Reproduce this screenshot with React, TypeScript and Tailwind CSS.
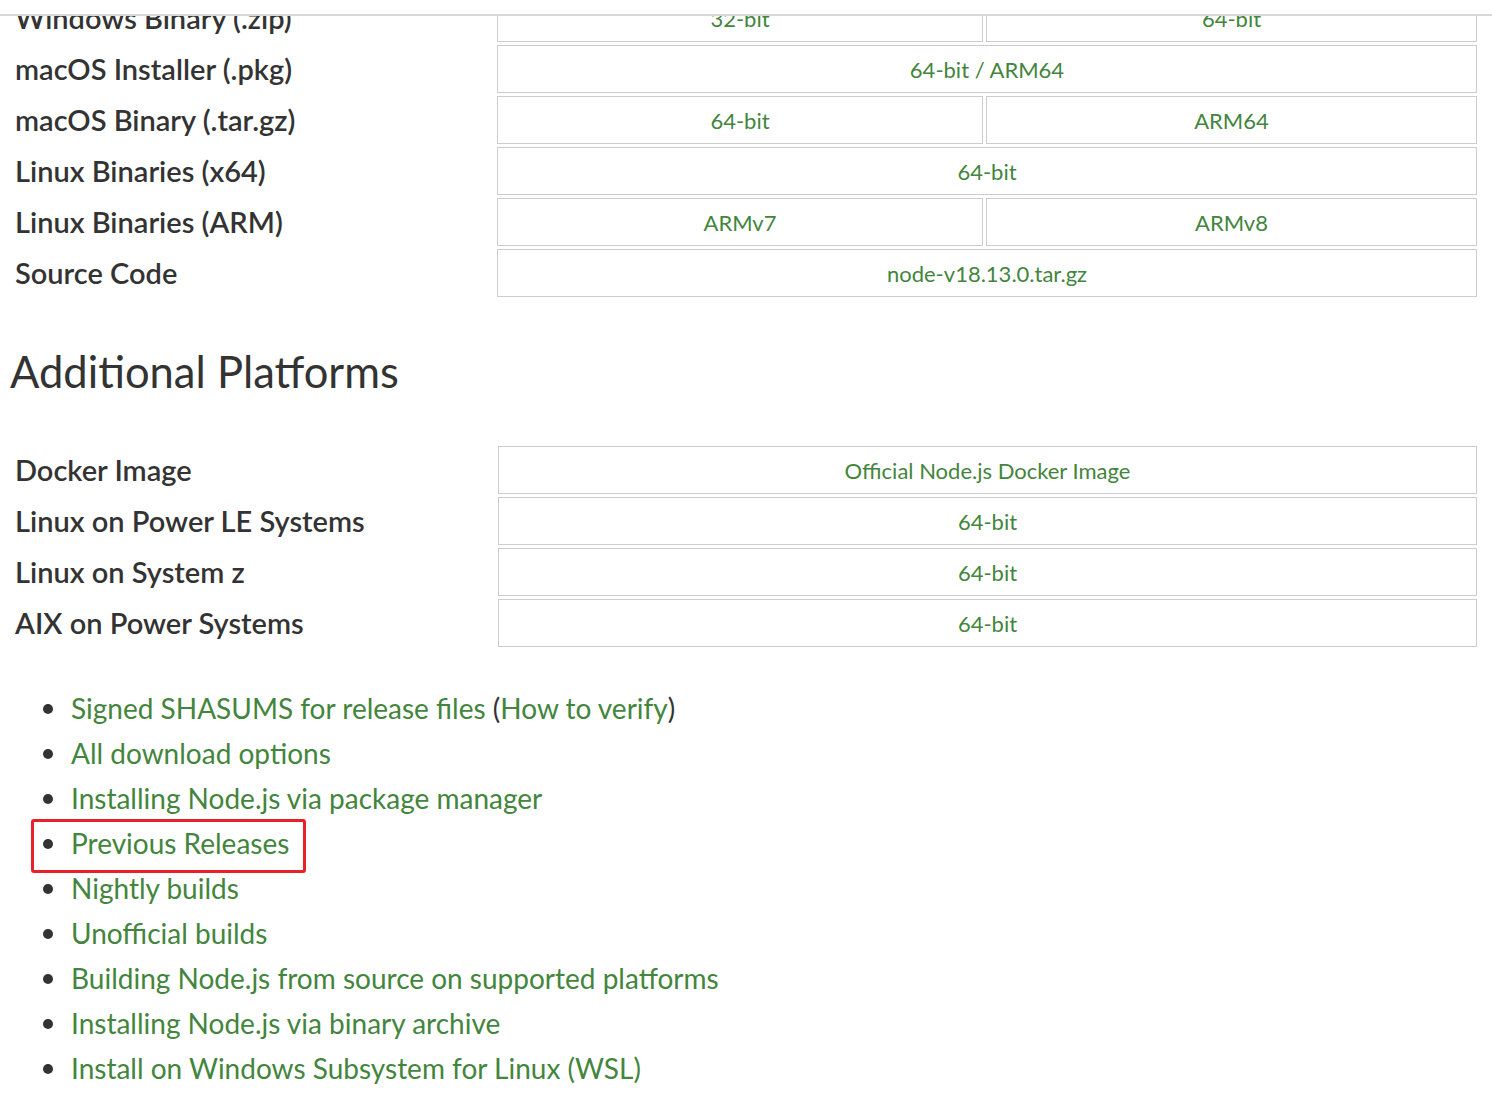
import React from "react";

type Cell = { text: string; w?: string };
type Row = { label: string; cells: Cell[] };

const rows1: Row[] = [
  { label: "Windows Binary (.zip)", cells: [{ text: "32-bit", w: "w-[486px]" }, { text: "64-bit" }] },
  { label: "macOS Installer (.pkg)", cells: [{ text: "64-bit / ARM64" }] },
  { label: "macOS Binary (.tar.gz)", cells: [{ text: "64-bit", w: "w-[486px]" }, { text: "ARM64" }] },
  { label: "Linux Binaries (x64)", cells: [{ text: "64-bit" }] },
  { label: "Linux Binaries (ARM)", cells: [{ text: "ARMv7", w: "w-[486px]" }, { text: "ARMv8" }] },
  { label: "Source Code", cells: [{ text: "node-v18.13.0.tar.gz" }] },
];

const rows2: Row[] = [
  { label: "Docker Image", cells: [{ text: "Official Node.js Docker Image" }] },
  { label: "Linux on Power LE Systems", cells: [{ text: "64-bit" }] },
  { label: "Linux on System z", cells: [{ text: "64-bit" }] },
  { label: "AIX on Power Systems", cells: [{ text: "64-bit" }] },
];

const links = [
  "All download options",
  "Installing Node.js via package manager",
  "Previous Releases",
  "Nightly builds",
  "Unofficial builds",
  "Building Node.js from source on supported platforms",
  "Installing Node.js via binary archive",
  "Install on Windows Subsystem for Linux (WSL)",
];

function DlTable({ rows, labelW }: { rows: Row[]; labelW: string }) {
  return (
    <div className="flex flex-col gap-[3px] pr-[15px]">
      {rows.map((r) => (
        <div key={r.label} className="flex h-[48px]">
          <div
            className={`${labelW} shrink-0 pl-[15px] flex items-center text-[29px] font-semibold text-[#333333]`}
          >
            {r.label}
          </div>
          <div className="flex-1 flex gap-[3px]">
            {r.cells.map((c, i) => (
              <div
                key={i}
                className={`${c.w ? c.w + " shrink-0" : "flex-1"} border border-[#cccccc] flex items-center justify-center text-[22px] text-[#43853d]`}
              >
                {c.text}
              </div>
            ))}
          </div>
        </div>
      ))}
    </div>
  );
}

function Bullet() {
  return <span className="w-[10px] h-[10px] rounded-full bg-[#333333] shrink-0 mr-[18px]" />;
}

export default function App() {
  return (
    <div className="w-[1492px] h-[1095px] bg-white overflow-hidden font-['Lato','Liberation_Sans',sans-serif]">
      <div className="h-[16px] border-b-2 border-[#d8d8d8] bg-white" />
      <div className="overflow-hidden">
        <div className="-mt-[22px]">
          <DlTable rows={rows1} labelW="w-[497px]" />
          <h2 className="mt-[44px] ml-[10px] h-[60px] leading-[60px] text-[43.5px] font-normal text-[#333333]">
            Additional Platforms
          </h2>
          <div className="mt-[45px]">
            <DlTable rows={rows2} labelW="w-[498px]" />
          </div>
          <ul className="mt-[39px] pl-[43px] flex flex-col">
            <li className="h-[45px] flex items-center text-[28px] leading-[45px]">
              <Bullet />
              <span className="text-[#43853d]">Signed SHASUMS for release files</span>
              <span className="text-[#333333] whitespace-pre"> (</span>
              <span className="text-[#43853d]">How to verify</span>
              <span className="text-[#333333]">)</span>
            </li>
            {links.map((l) => (
              <li key={l} className="h-[45px] flex items-center text-[28px] leading-[45px]">
                <div className="relative flex items-center">
                  {l === "Previous Releases" && (
                    <span className="absolute -left-[12px] -right-[17px] -top-[2px] -bottom-[7px] border-[3px] border-[#e8202a] rounded-[3px]" />
                  )}
                  <Bullet />
                  <span className="text-[#43853d]">{l}</span>
                </div>
              </li>
            ))}
          </ul>
        </div>
      </div>
    </div>
  );
}
